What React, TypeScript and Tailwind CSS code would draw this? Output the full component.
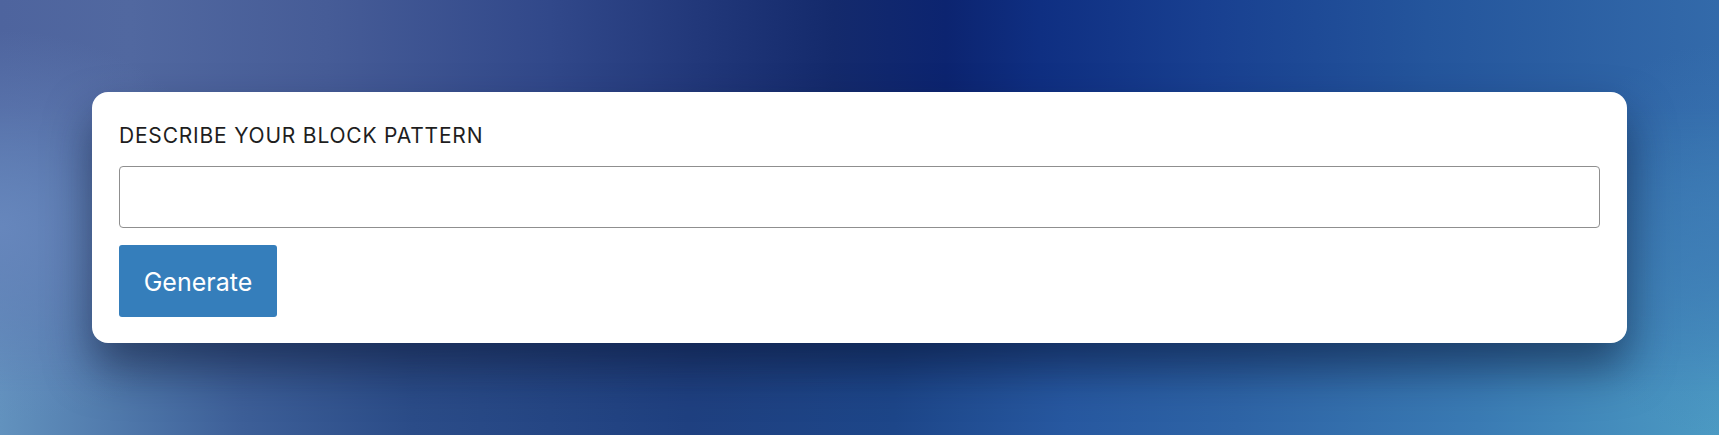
export default function App() {
  return (
    <div className="relative min-h-[435px] w-full overflow-hidden bg-[linear-gradient(90deg,#6292be_0%,#3d5f98_14%,#2b4c88_24%,#1f4080_40%,#1d4689_52%,#2758a0_62%,#2e64a6_72%,#3a7bb4_86%,#4c9ac3_100%)] px-[92px] py-[92px] font-['Inter',sans-serif]">
      <div className="absolute inset-0 bg-[linear-gradient(90deg,#4e649e_0%,#5168a0_7.6%,#465c97_19%,#31488a_32%,#213779_41%,#142a6c_48.5%,#0c2470_55%,#0f2f82_60.5%,#183f90_70%,#24559c_83%,#336aaa_100%)] [mask-image:linear-gradient(to_bottom,black_25%,transparent_90%)]" />
      <div className="absolute inset-0 bg-[radial-gradient(ellipse_14%_45%_at_0%_52%,rgba(104,136,190,0.9)_0%,rgba(104,136,190,0)_100%),radial-gradient(ellipse_10%_45%_at_100%_55%,rgba(62,124,182,0.7)_0%,rgba(62,124,182,0)_100%)]" />
      <div className="relative flex flex-col rounded-[16px] bg-white px-[27px] pt-[30px] pb-[26px] shadow-[0_25px_45px_rgba(10,20,50,0.55)]">
        <label className="text-[21px] leading-[27px] tracking-[0.038em] text-[#1e1e1e]">
          DESCRIBE YOUR BLOCK PATTERN
        </label>
        <input
          type="text"
          className="mt-[17px] h-[62px] w-full rounded-[4px] border-[1.5px] border-[#8f8f8f] bg-white px-3 text-[20px] outline-none"
        />
        <div className="mt-[17px]">
          <button className="h-[72px] w-[158px] rounded-[3px] bg-[#357ebb] pt-[3px] text-[25px] text-white">
            Generate
          </button>
        </div>
      </div>
    </div>
  )
}
